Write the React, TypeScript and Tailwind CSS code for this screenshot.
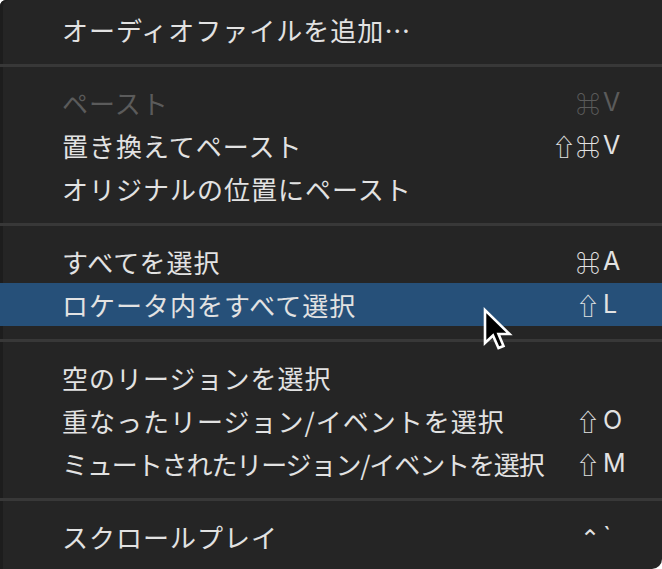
type Item = {
  label: string;
  mods?: string;
  keyChar?: string;
  disabled?: boolean;
  active?: boolean;
  tight?: boolean;
};

const groups: Item[][] = [
  [{ label: "オーディオファイルを追加…" }],
  [
    { label: "ペースト", mods: "⌘", keyChar: "V", disabled: true },
    { label: "置き換えてペースト", mods: "⇧⌘", keyChar: "V" },
    { label: "オリジナルの位置にペースト" },
  ],
  [
    { label: "すべてを選択", mods: "⌘", keyChar: "A" },
    { label: "ロケータ内をすべて選択", mods: "⇧", keyChar: "L", active: true },
  ],
  [
    { label: "空のリージョンを選択" },
    { label: "重なったリージョン/イベントを選択", mods: "⇧", keyChar: "O" },
    { label: "ミュートされたリージョン/イベントを選択", mods: "⇧", keyChar: "M", tight: true },
  ],
  [{ label: "スクロールプレイ", mods: "⌃", keyChar: "`" }],
];

function Row({ item }: { item: Item }) {
  const color = item.disabled ? "text-[#5b5b5b]" : "text-[#e2e2e2]";
  return (
    <div
      className={`flex h-[43px] items-center pl-[62px] pr-[15px] ${color} ${
        item.active ? "bg-[#265079]" : ""
      }`}
    >
      <span
        className={`min-w-0 flex-1 whitespace-nowrap text-[26px] leading-none ${
          item.tight ? "tracking-[-1.1px]" : "tracking-[1px]"
        }`}
        style={{ fontFamily: '"Noto Sans CJK JP", sans-serif' }}
      >
        {item.label}
      </span>
      {item.keyChar && (
        <>
          <span
            className="w-[70px] shrink-0 whitespace-nowrap text-right text-[24px] leading-none"
            style={{ fontFamily: '"Noto Sans CJK JP", "DejaVu Sans", sans-serif' }}
          >
            {item.mods}
          </span>
          <span className="ml-[3px] w-[44px] shrink-0 text-[25px] leading-none">{item.keyChar}</span>
        </>
      )}
    </div>
  );
}

function Cursor() {
  return (
    <svg
      className="absolute left-[482px] top-[307px]"
      width="34"
      height="46"
      viewBox="-3 -3 34 46"
      overflow="visible"
    >
      <path
        d="M0 0 V33 L8 25.5 L13.5 38 L18.5 36 L13.5 24 H24.5 Z"
        fill="#000"
        stroke="#fff"
        strokeWidth="2.6"
        strokeLinejoin="miter"
      />
    </svg>
  );
}

export default function App() {
  return (
    <div className="h-[569px] w-[662px] bg-white">
      <div
        className="relative h-full w-full overflow-hidden rounded-tl-[6px] rounded-br-[10px] bg-[#252525] pt-[8px] shadow-[inset_3px_0_0_#1d1d1d]"
        style={{ fontFamily: '"Inter", "Noto Sans CJK JP", "DejaVu Sans", sans-serif' }}
      >
        {groups.map((g, gi) => (
          <div key={gi}>
            {gi > 0 && (
              <div className="pb-[14px] pt-[13px]">
                <div className="h-[3px] bg-[#383838]" />
              </div>
            )}
            {g.map((item) => (
              <Row key={item.label} item={item} />
            ))}
          </div>
        ))}
        <Cursor />
      </div>
    </div>
  );
}
